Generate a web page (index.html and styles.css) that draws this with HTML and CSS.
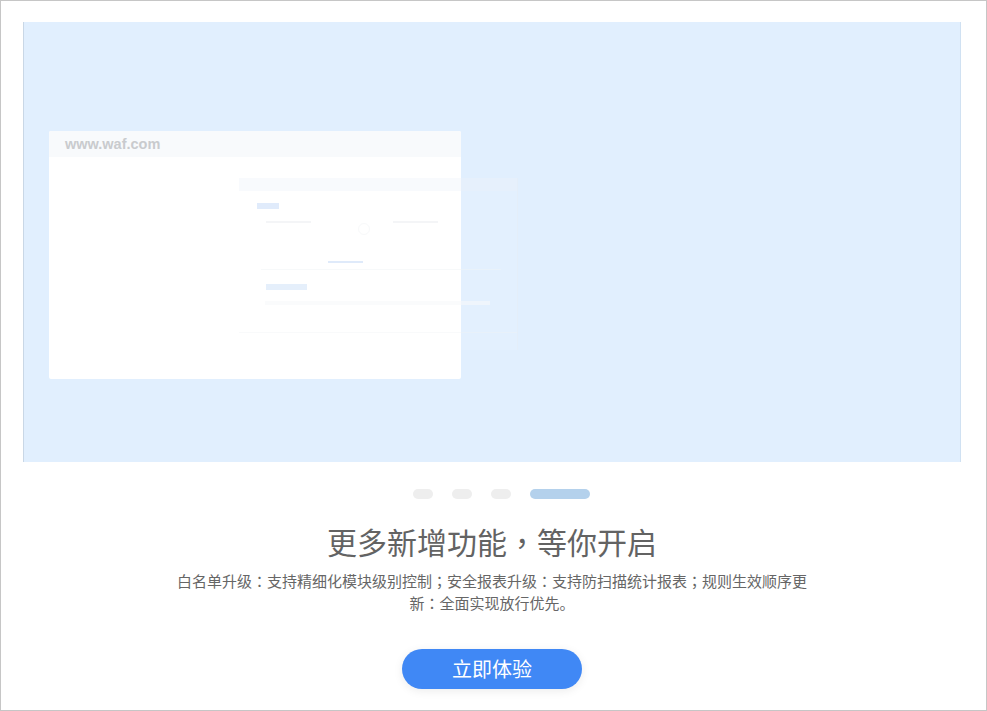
FILE: index.html
```html
<!DOCTYPE html>
<html lang="zh-CN">
<head>
<meta charset="utf-8">
<title>更多新增功能</title>
<link rel="stylesheet" href="styles.css">
</head>
<body>
<div class="frame">
  <div class="banner">
    <div class="mock-window">
      <div class="mock-bar">www.waf.com</div>
      <div class="mock-body"></div>
      <div class="mock-panel">
        <div class="mp-head"></div>
        <div class="mp-chip"></div>
        <div class="mp-row">
          <span class="mp-line"></span>
          <span class="mp-dot"></span>
          <span class="mp-line"></span>
        </div>
        <div class="mp-tab"></div>
        <div class="mp-rule"></div>
        <div class="mp-chip2"></div>
        <div class="mp-field"></div>
        <div class="mp-rule2"></div>
      </div>
    </div>
  </div>
  <div class="dots">
    <span class="dot"></span>
    <span class="dot"></span>
    <span class="dot"></span>
    <span class="dot active"></span>
  </div>
  <h1 class="title">更多新增功能<span class="punc" lang="zh-Hant">，</span>等你开启</h1>
  <p class="desc">白名单升级<span class="punc" lang="zh-Hant">：</span>支持精细化模块级别控制<span class="punc" lang="zh-Hant">；</span>安全报表升级<span class="punc" lang="zh-Hant">：</span>支持防扫描统计报表<span class="punc" lang="zh-Hant">；</span>规则生效顺序更新<span class="punc" lang="zh-Hant">：</span>全面实现放行优先。</p>
  <button class="cta">立即体验</button>
</div>
</body>
</html>
```

FILE: styles.css
```css
html, body {
  margin: 0;
  padding: 0;
  background: #ffffff;
}

.frame {
  box-sizing: border-box;
  width: 987px;
  height: 711px;
  border: 1px solid #c6c6c6;
  padding-right: 3px;
  display: flex;
  flex-direction: column;
  align-items: center;
  font-family: "Noto Sans CJK SC", "Noto Sans", sans-serif;
  overflow: hidden;
}

.punc {
  font-family: "Noto Sans CJK TC", "Noto Sans CJK SC", sans-serif;
}

.banner {
  box-sizing: border-box;
  width: 938px;
  height: 440px;
  margin-top: 21px;
  background: #e1effe;
  border-left: 1px solid #c9d7e6;
  border-right: 1px solid #d0e1f2;
  padding: 109px 0 0 25px;
}

.mock-window {
  position: relative;
  width: 412px;
  height: 248px;
  background: #ffffff;
  border-radius: 2px;
  display: flex;
  flex-direction: column;
}

.mock-bar {
  height: 26px;
  line-height: 26px;
  background: #f8fafc;
  padding-left: 16px;
  font-family: "Liberation Sans", Arial, sans-serif;
  font-weight: bold;
  font-size: 14.5px;
  color: #c9cbce;
  border-radius: 2px 2px 0 0;
}

.mock-body {
  flex: 1;
}

.mock-panel {
  position: absolute;
  left: 190px;
  top: 47px;
  width: 278px;
  height: 172px;
  background: rgba(250, 252, 254, 0.08);
  border-right: 1px solid rgba(230, 236, 242, 0.35);
}

.mp-head {
  height: 13px;
  background: rgba(236, 242, 248, 0.35);
}

.mp-chip {
  width: 22px;
  height: 6px;
  margin: 12px 0 0 18px;
  background: #e0ebfb;
}

.mp-row {
  display: flex;
  align-items: flex-start;
  margin: 12px 0 0 27px;
}

.mp-line {
  width: 45px;
  height: 2px;
  background: #f4f5f7;
}

.mp-dot {
  width: 10px;
  height: 10px;
  margin: 2px 23px 0 47px;
  border-radius: 50%;
  border: 1px solid #f8f9fa;
}

.mp-tab {
  width: 35px;
  height: 2px;
  margin: 26px 0 0 89px;
  background: #dfeafa;
}

.mp-rule {
  height: 1px;
  margin: 6px 0 0 22px;
  width: 240px;
  background: rgba(240, 243, 246, 0.5);
}

.mp-chip2 {
  width: 41px;
  height: 6px;
  margin: 14px 0 0 27px;
  background: #e5effb;
}

.mp-field {
  width: 225px;
  height: 4px;
  margin: 11px 0 0 26px;
  background: rgba(246, 248, 250, 0.6);
}

.mp-rule2 {
  height: 1px;
  width: 278px;
  margin-top: 27px;
  background: rgba(240, 243, 246, 0.4);
}

.dots {
  display: flex;
  gap: 19px;
  margin-top: 27px;
  padding-left: 19px;
  height: 10px;
}

.dot {
  width: 20px;
  height: 10px;
  border-radius: 5px;
  background: #eeeeee;
}

.dot.active {
  width: 60px;
  background: #b4d1ec;
}

.title {
  margin: 22px 0 0 0;
  font-size: 30px;
  line-height: 40px;
  font-weight: normal;
  color: #636363;
}

.desc {
  width: 636px;
  margin: 9px 0 0 0;
  font-size: 15px;
  line-height: 22px;
  color: #666666;
  text-align: center;
}

.cta {
  margin-top: 35px;
  width: 180px;
  height: 40px;
  border: none;
  border-radius: 20px;
  background: #4088f5;
  color: #ffffff;
  font-family: "Noto Sans CJK SC", "Noto Sans", sans-serif;
  font-size: 20px;
  line-height: 40px;
  padding: 0;
  box-shadow: 0 2px 10px rgba(0, 0, 0, 0.08);
}
```
